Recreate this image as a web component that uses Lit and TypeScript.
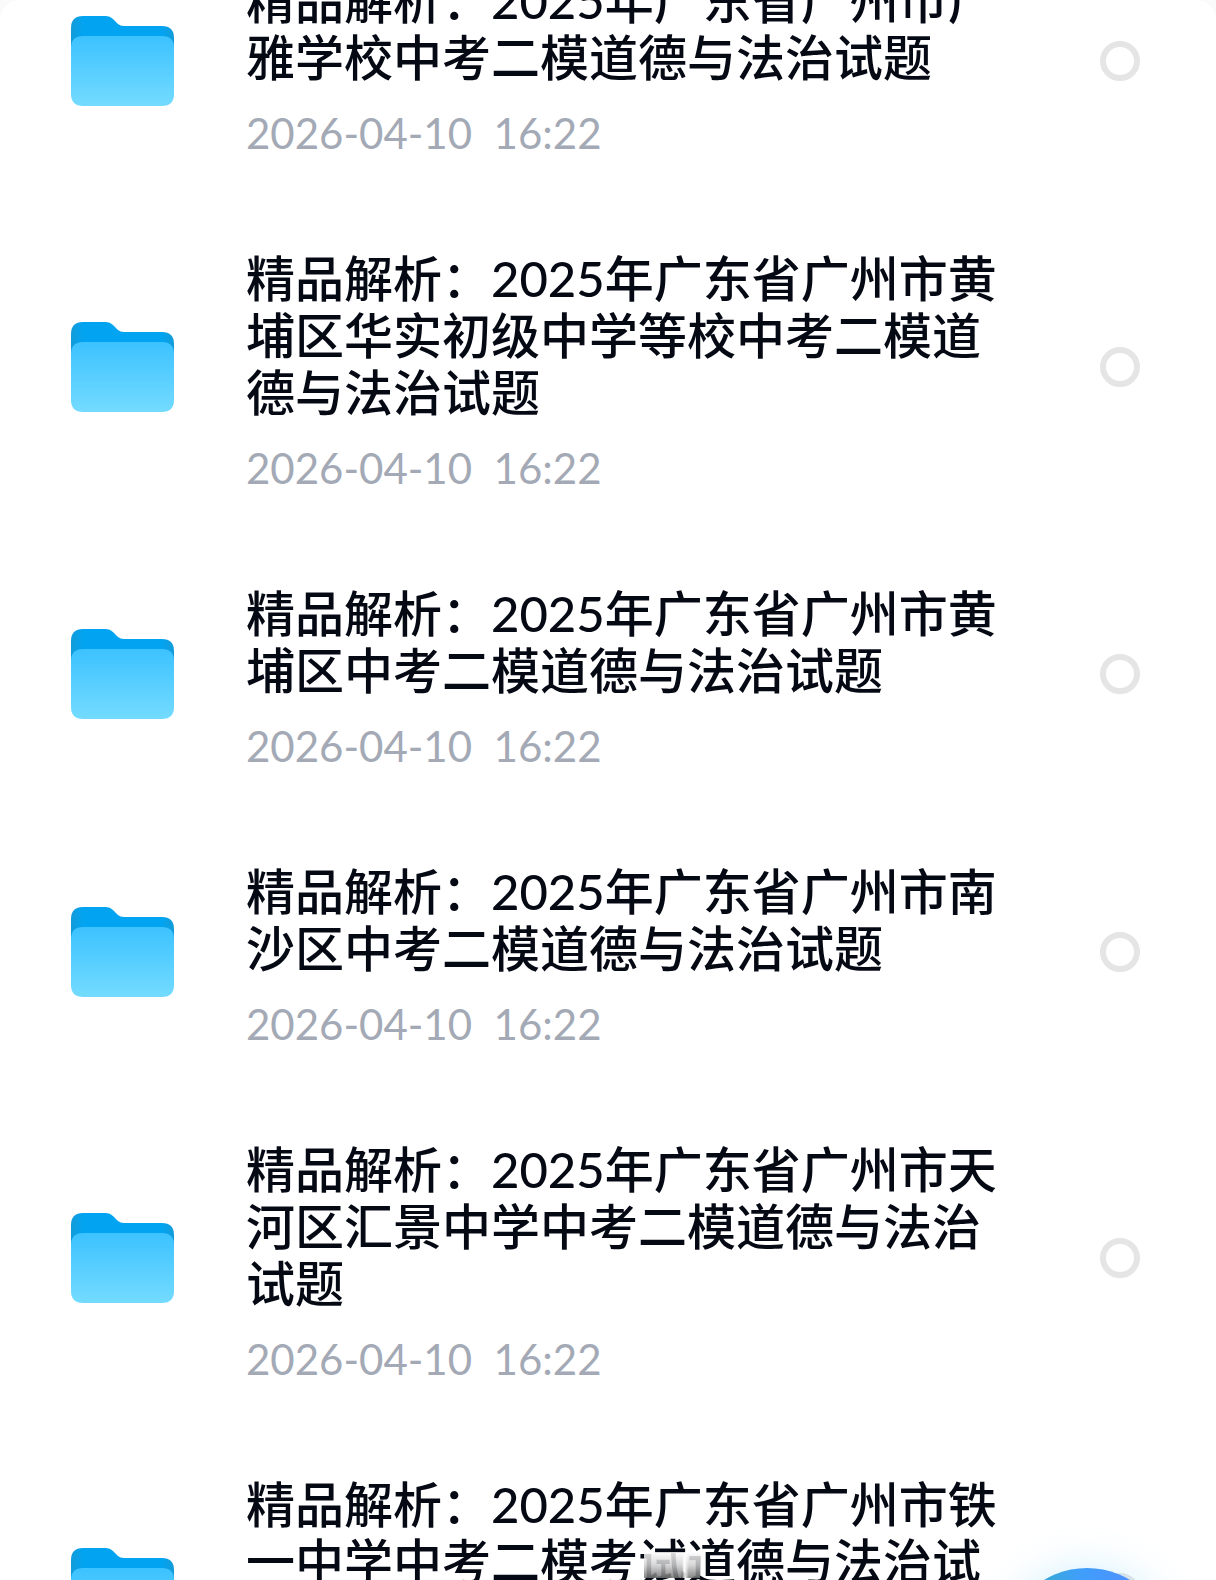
import { LitElement, html, css, svg } from "lit";
import { customElement, property } from "lit/decorators.js";

interface Folder {
  name: string;
  time: string;
}

const TIME = "2026-04-10  16:22";

const FOLDERS: Folder[] = [
  { name: "精品解析：2025年广东省广州市广雅学校中考二模道德与法治试题", time: TIME },
  { name: "精品解析：2025年广东省广州市黄埔区华实初级中学等校中考二模道德与法治试题", time: TIME },
  { name: "精品解析：2025年广东省广州市黄埔区中考二模道德与法治试题", time: TIME },
  { name: "精品解析：2025年广东省广州市南沙区中考二模道德与法治试题", time: TIME },
  { name: "精品解析：2025年广东省广州市天河区汇景中学中考二模道德与法治试题", time: TIME },
  { name: "精品解析：2025年广东省广州市铁一中学中考二模考试道德与法治试题", time: TIME },
];

const folderIcon = html`<svg class="icon" viewBox="0 0 103 90" aria-hidden="true">
  <defs>
    <linearGradient id="back" x1="0" y1="0" x2="1" y2="0">
      <stop offset="0" stop-color="#149bd8" />
      <stop offset="0.12" stop-color="#02a4f2" />
      <stop offset="0.88" stop-color="#02a4f2" />
      <stop offset="1" stop-color="#149bd8" />
    </linearGradient>
    <linearGradient id="front" x1="0" y1="0" x2="0" y2="1">
      <stop offset="0" stop-color="#3cc2ff" />
      <stop offset="1" stop-color="#74dbff" />
    </linearGradient>
  </defs>
  ${svg`<path fill="url(#back)" d="M0 12Q0 0 12 0H35Q39 0 42 3L47 8Q49 10 53 10H91Q103 10 103 22V60H0Z" />
  <path fill="url(#front)" d="M0 32Q0 20 12 20H91Q103 20 103 32V78Q103 90 91 90H12Q0 90 0 78Z" />`}
</svg>`;

@customElement("folder-row")
class FolderRow extends LitElement {
  @property({ attribute: false }) folder!: Folder;

  static styles = css`
    :host {
      display: block;
    }
    .row {
      display: flex;
      align-items: center;
      padding: 51px 76px 50px 71px;
    }
    .icon {
      flex: none;
      display: block;
      width: 103px;
      height: 90px;
    }
    .text {
      flex: 1;
      display: flex;
      flex-direction: column;
      gap: 31px;
      padding: 0 96px 0 72px;
    }
    .name {
      margin: 0;
      font-size: 49px;
      line-height: 57px;
      font-weight: 500;
      color: #050914;
      word-break: break-all;
    }
    .time {
      font-size: 42px;
      line-height: 32px;
      color: #a3a9b5;
      white-space: pre;
    }
    .pick {
      flex: none;
      appearance: none;
      box-sizing: border-box;
      width: 40px;
      height: 40px;
      margin: 0;
      border: 6px solid #e5e5e5;
      border-radius: 50%;
      background: #fff;
    }
    .pick:checked {
      border-color: #02a4f2;
      border-width: 12px;
    }
  `;

  render() {
    return html`<div class="row">
      ${folderIcon}
      <div class="text">
        <h2 class="name">${this.folder.name}</h2>
        <time class="time">${this.folder.time}</time>
      </div>
      <input class="pick" type="checkbox" aria-label=${this.folder.name} />
    </div>`;
  }
}

@customElement("app-root")
class AppRoot extends LitElement {
  static styles = css`
    :host {
      display: block;
      position: relative;
      height: 100vh;
      overflow: hidden;
      background: #fafafa;
      font-family: Lato, "Noto Sans CJK SC", sans-serif;
    }
    .sheet {
      min-height: 100%;
      overflow: hidden;
      background: #fff;
      border-radius: 20px 20px 0 0;
    }
    .list {
      margin: -79px 0 0;
      padding: 0;
      list-style: none;
    }
    .smudge {
      position: absolute;
      left: 644px;
      bottom: 2px;
      width: 56px;
      height: 26px;
      background:
        linear-gradient(90deg, transparent 68%, #fff 72%, transparent 80%),
        linear-gradient(#fff, #d0d0d0 50%, #707070);
      opacity: 0.85;
      pointer-events: none;
    }
    .add {
      position: absolute;
      right: 46px;
      bottom: -154px;
      width: 166px;
      height: 166px;
      padding: 0;
      border: 0;
      border-radius: 50%;
      background: linear-gradient(90deg, #38a8d8 25%, #3f9ffa 45%, #4a94ff 70%, #4a7ff0);
      box-shadow: 0 0 40px rgba(110, 205, 255, 0.3);
    }
  `;

  render() {
    return html`<main class="sheet">
        <ul class="list">
          ${FOLDERS.map((f) => html`<li><folder-row .folder=${f}></folder-row></li>`)}
        </ul>
      </main>
      <div class="smudge" aria-hidden="true"></div>
      <button class="add" aria-label="新建"></button>`;
  }
}
